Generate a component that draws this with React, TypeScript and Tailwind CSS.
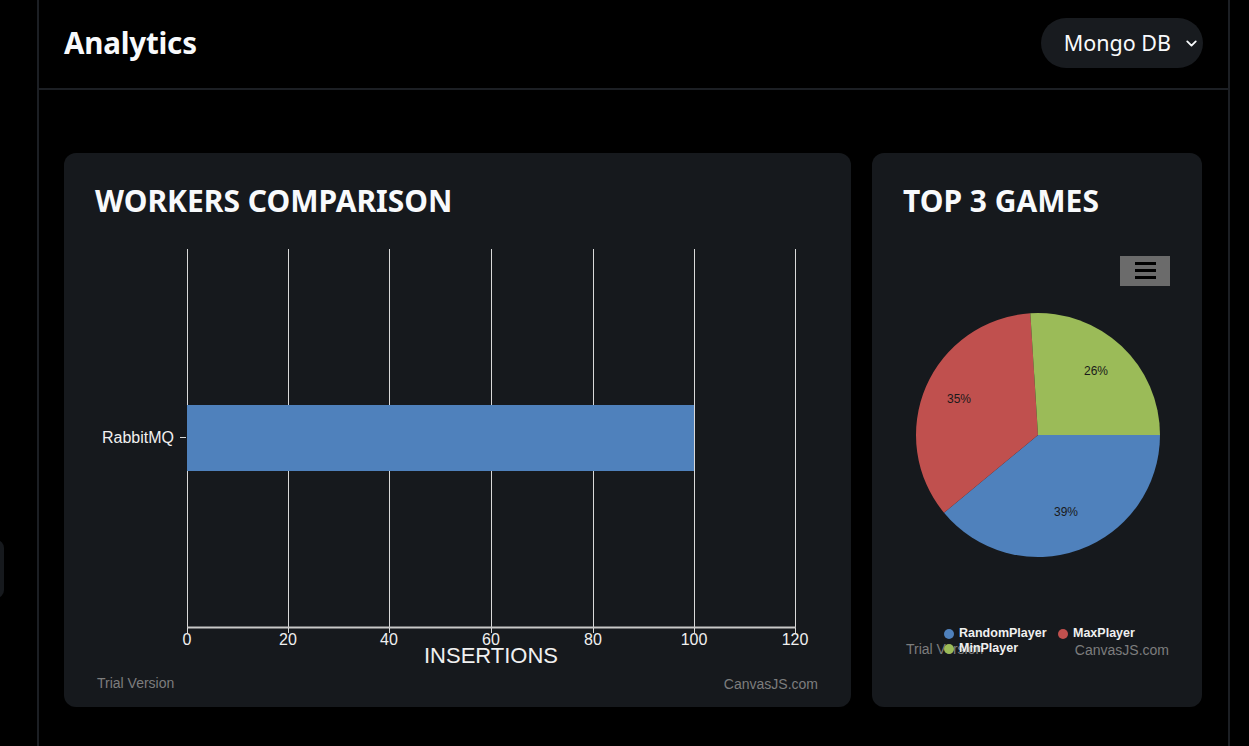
import { ChevronDown } from "lucide-react";

const gridX = [187, 288, 389, 491, 593, 694, 795];
const ticks = ["0", "20", "40", "60", "80", "100", "120"];

// pie geometry (screen coords, clockwise from 3 o'clock)
const cx = 166;
const cy = 205;
const r = 122;
const slices = [
  { from: 0, to: 140.4, color: "#4f81bc" },
  { from: 140.4, to: 266.4, color: "#c0504e" },
  { from: 266.4, to: 360, color: "#9bbb58" },
];

const pt = (deg: number) => {
  const a = (deg * Math.PI) / 180;
  return [cx + r * Math.cos(a), cy + r * Math.sin(a)];
};

const arc = (from: number, to: number) => {
  const [x1, y1] = pt(from);
  const [x2, y2] = pt(to);
  const large = to - from > 180 ? 1 : 0;
  return `M${cx},${cy} L${x1},${y1} A${r},${r} 0 ${large} 1 ${x2},${y2} Z`;
};

function BarChart() {
  // svg origin = card left (64) / page y 230
  return (
    <svg width="787" height="477" className="block" style={{ fontFamily: '"Liberation Sans", Arial, sans-serif' }}>
      {gridX.map((x) => (
        <line key={x} x1={x - 64 + 0.5} y1={19} x2={x - 64 + 0.5} y2={398} stroke="#d9d9d9" strokeWidth="1" />
      ))}
      <rect x={123} y={175} width={507} height={66} fill="#4f81bc" />
      <line x1={123} y1={397.5} x2={732} y2={397.5} stroke="#c8c8c8" strokeWidth="2" />
      {gridX.map((x) => (
        <line key={"t" + x} x1={x - 64 + 0.5} y1={398} x2={x - 64 + 0.5} y2={403} stroke="#d9d9d9" />
      ))}
      {gridX.map((x, i) => (
        <text key={"l" + x} x={x - 64} y={415} fill="#f0f0f0" fontSize="16" textAnchor="middle">
          {ticks[i]}
        </text>
      ))}
      <line x1={116} y1={207.5} x2={122} y2={207.5} stroke="#d9d9d9" />
      <text x={110} y={213} fill="#f0f0f0" fontSize="16" textAnchor="end">
        RabbitMQ
      </text>
      <text x={427} y={433} fill="#f0f0f0" fontSize="22" textAnchor="middle">
        INSERTIONS
      </text>
      <text x={33} y={458} fill="#7d7d7d" fontSize="14">
        Trial Version
      </text>
      <text x={754} y={459} fill="#7d7d7d" fontSize="14" textAnchor="end">
        CanvasJS.com
      </text>
    </svg>
  );
}

function PieChart() {
  // svg origin = card left (872) / page y 230
  return (
    <svg width="330" height="477" className="block" style={{ fontFamily: '"Liberation Sans", Arial, sans-serif' }}>
      <rect x={248} y={26} width={50} height={30} fill="#6b6b6b" />
      <rect x={263} y={32} width={21} height={3} fill="#000" />
      <rect x={263} y={39} width={21} height={3} fill="#000" />
      <rect x={263} y={46} width={21} height={3} fill="#000" />
      {slices.map((s) => (
        <path key={s.color} d={arc(s.from, s.to)} fill={s.color} />
      ))}
      <text x={224} y={145} fill="#1a1a1a" fontSize="12" textAnchor="middle">26%</text>
      <text x={87} y={173} fill="#1a1a1a" fontSize="12" textAnchor="middle">35%</text>
      <text x={194} y={286} fill="#1a1a1a" fontSize="12" textAnchor="middle">39%</text>
      <text x={34} y={424} fill="#7d7d7d" fontSize="14">Trial Version</text>
      <text x={297} y={425} fill="#7d7d7d" fontSize="14" textAnchor="end">CanvasJS.com</text>
      <circle cx={77} cy={404} r={5} fill="#4f81bc" />
      <text x={87} y={407} fill="#f0f0f0" fontSize="12.5" fontWeight="bold">RandomPlayer</text>
      <circle cx={191} cy={404} r={5} fill="#c0504e" />
      <text x={201} y={407} fill="#f0f0f0" fontSize="12.5" fontWeight="bold">MaxPlayer</text>
      <circle cx={77} cy={419} r={5} fill="#9bbb58" />
      <text x={87} y={422} fill="#f0f0f0" fontSize="12.5" fontWeight="bold">MinPlayer</text>
    </svg>
  );
}

export default function App() {
  return (
    <div className="relative h-[746px] w-[1249px] overflow-hidden bg-black" style={{ fontFamily: '"Noto Sans", "Open Sans", sans-serif' }}>
      {/* sidebar item peeking in */}
      <div className="absolute left-[-20px] top-[540px] h-[58px] w-[24px] rounded-r-lg bg-[#16191d]" />

      <div className="ml-[37px] flex h-full w-[1193px] flex-col border-x-2 border-[#1c1f24]">
        {/* HEADER */}
        <div className="flex h-[90px] shrink-0 items-center justify-between border-b-2 border-[#1c1f24] pl-[25px] pr-[25px] pb-[2px]">
          <h1 className="text-[29.5px] font-bold tracking-[-0.2px] text-[#f8fafc]">Analytics</h1>
          <button className="flex h-[50px] w-[162px] items-center justify-end gap-[12px] rounded-full bg-[#181b1f] pr-[3px] text-[21.5px] text-[#f8fafc]">
            Mongo DB
            <ChevronDown size={17} strokeWidth={2.6} />
          </button>
        </div>

        {/* CARDS */}
        <div className="flex gap-[21px] px-[25px] pt-[63px]">
          <div className="h-[554px] w-[787px] rounded-xl bg-[#16191d]">
            <h2 className="mb-[2px] pl-[31px] pt-[21px] text-[30px] font-bold leading-[54px] tracking-[0px] text-[#f8fafc]">
              WORKERS COMPARISON
            </h2>
            <BarChart />
          </div>
          <div className="h-[554px] w-[330px] rounded-xl bg-[#16191d]">
            <h2 className="mb-[2px] pl-[31px] pt-[21px] text-[30px] font-bold leading-[54px] tracking-[0px] text-[#f8fafc]">
              TOP 3 GAMES
            </h2>
            <PieChart />
          </div>
        </div>
      </div>
    </div>
  );
}
